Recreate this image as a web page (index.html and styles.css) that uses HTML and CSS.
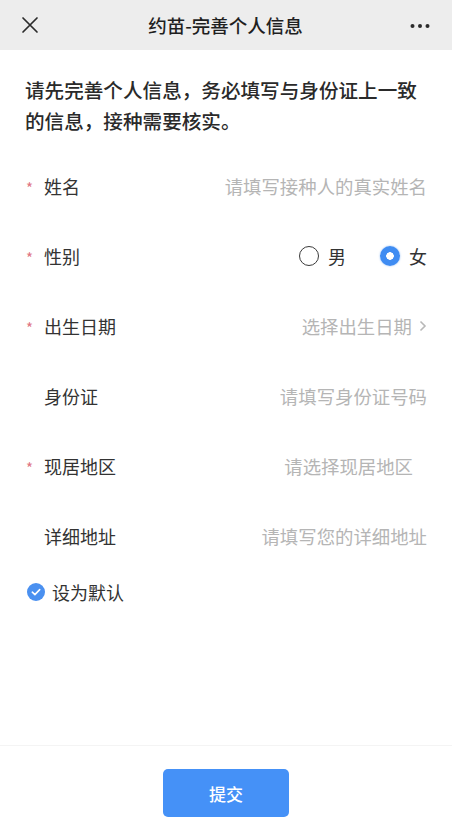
FILE: index.html
```html
<!DOCTYPE html>
<html lang="zh-CN">
<head>
<meta charset="utf-8">
<title>约苗-完善个人信息</title>
<link rel="stylesheet" href="styles.css">
</head>
<body>
<div class="page">
  <header class="topbar">
    <svg class="icon-close" width="18" height="18" viewBox="0 0 18 18"><path d="M2 2 L16 16 M16 2 L2 16" stroke="#2b2b2b" stroke-width="1.7" fill="none" stroke-linecap="round"/></svg>
    <div class="title">约苗-完善个人信息</div>
    <svg class="icon-more" width="20" height="6" viewBox="0 0 20 6"><circle cx="2.5" cy="3" r="2" fill="#2b2b2b"/><circle cx="10" cy="3" r="2" fill="#2b2b2b"/><circle cx="17.5" cy="3" r="2" fill="#2b2b2b"/></svg>
  </header>

  <main class="content">
    <p class="intro">请先完善个人信息，务必填写与身份证上一致的信息，接种需要核实。</p>

    <div class="form">
      <div class="row">
        <span class="star">*</span><span class="label">姓名</span>
        <span class="value placeholder">请填写接种人的真实姓名</span>
      </div>
      <div class="row">
        <span class="star">*</span><span class="label">性别</span>
        <div class="value radios">
          <span class="radio"><span class="circle"></span>男</span>
          <span class="radio"><span class="circle on"></span>女</span>
        </div>
      </div>
      <div class="row">
        <span class="star">*</span><span class="label">出生日期</span>
        <span class="value placeholder">选择出生日期<svg class="chev" width="8" height="12" viewBox="0 0 8 12"><path d="M1.5 1.5 L6 6 L1.5 10.5" stroke="#b8b8b8" stroke-width="1.6" fill="none"/></svg></span>
      </div>
      <div class="row">
        <span class="star"></span><span class="label">身份证</span>
        <span class="value placeholder">请填写身份证号码</span>
      </div>
      <div class="row">
        <span class="star">*</span><span class="label">现居地区</span>
        <span class="value placeholder">请选择现居地区<span class="chev-space"></span></span>
      </div>
      <div class="row">
        <span class="star"></span><span class="label">详细地址</span>
        <span class="value placeholder">请填写您的详细地址</span>
      </div>
      <div class="default">
        <svg class="check" width="18" height="18" viewBox="0 0 18 18"><circle cx="9" cy="9" r="9" fill="#4a90f0"/><path d="M5.3 9.2 L7.9 11.6 L12.7 6.6" stroke="#fff" stroke-width="1.6" fill="none" stroke-linecap="round" stroke-linejoin="round"/></svg>
        <span>设为默认</span>
      </div>
    </div>
  </main>

  <footer class="footer">
    <button class="submit">提交</button>
  </footer>
</div>
</body>
</html>
```
FILE: styles.css
```css
* { box-sizing: border-box; }
html, body {
  margin: 0;
  padding: 0;
  background: #fff;
  font-family: "Noto Sans CJK SC", "Noto Sans", sans-serif;
  color: #333;
}
.page {
  display: flex;
  flex-direction: column;
  height: 839px;
}
.topbar {
  height: 50px;
  background: #ededed;
  display: flex;
  align-items: center;
  justify-content: space-between;
  padding: 0 22px 0 21px;
  flex-shrink: 0;
}
.title {
  font-size: 18.5px;
  font-weight: 500;
  color: #1f1f1f;
  margin-left: 2px;
}
.icon-more { margin-top: 1px; }
.content {
  flex: 1;
}
.intro {
  margin: 0;
  padding: 24px 25px 0 25px;
  font-size: 19.6px;
  line-height: 31px;
  font-weight: 500;
  color: #2a2a2a;
}
.form {
  padding: 15px 25px 0 25px;
}
.row {
  height: 70px;
  display: flex;
  align-items: center;
  font-size: 18px;
}
.star {
  width: 19px;
  color: #e07583;
  font-size: 15px;
  padding-top: 2px;
  flex-shrink: 0;
  padding-left: 1px;
}
.label {
  color: #333;
}
.value {
  margin-left: auto;
  display: flex;
  align-items: center;
}
.placeholder {
  color: #b5b5b5;
  font-size: 18.4px;
}
.chev {
  margin-left: 7px;
}
.chev-space {
  display: inline-block;
  width: 14px;
}
.radios {
  gap: 34px;
  color: #333;
}
.radio {
  display: flex;
  align-items: center;
  gap: 9px;
}
.circle {
  width: 20px;
  height: 20px;
  border-radius: 50%;
  border: 1.5px solid #3a3a3a;
  display: inline-block;
}
.circle.on {
  border: none;
  background: radial-gradient(circle, #fff 0 3.5px, #3f8cf2 4px);
  box-shadow: 0 0 2px rgba(63, 140, 242, 0.6);
}
.default {
  height: 42px;
  display: flex;
  align-items: center;
  gap: 7px;
  padding-left: 2px;
  font-size: 18px;
  color: #333;
}
.footer {
  height: 94px;
  flex-shrink: 0;
  border-top: 1px solid #f4f4f4;
  display: flex;
  justify-content: center;
  padding-top: 23px;
}
.submit {
  width: 126px;
  height: 48px;
  border: none;
  border-radius: 5px;
  background: #4591f7;
  color: #fff;
  font-family: "Noto Sans CJK SC", sans-serif;
  font-size: 17px;
  font-weight: 500;
  padding: 0;
}
```
